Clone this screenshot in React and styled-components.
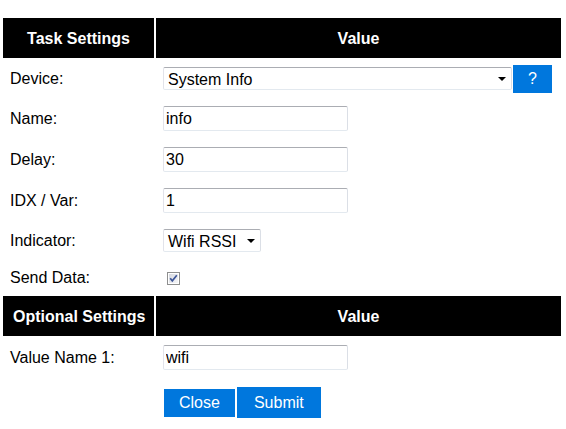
import React from "react";
import styled, { createGlobalStyle } from "styled-components";

const Global = createGlobalStyle`
  html, body { margin: 0; padding: 0; background: #fff; }
  body { font-family: "Liberation Sans", Arial, sans-serif; font-size: 16px; color: #000; }
`;

const Page = styled.div`
  padding: 16px 0 0 1px;
`;

const Table = styled.table`
  border-collapse: separate;
  border-spacing: 2px;
  table-layout: fixed;
  width: 562px;
`;

const Th = styled.th`
  box-sizing: border-box;
  width: ${(p) => (p.$narrow ? "151px" : "auto")};
  height: 40px;
  padding: 1px 10px 0;
  background: #000;
  color: #fff;
  font-weight: bold;
  font-size: 16px;
  text-align: center;
  vertical-align: middle;
  white-space: nowrap;
`;

const Td = styled.td`
  padding: 7px;
  vertical-align: middle;
  white-space: nowrap;
`;

const Input = styled.input`
  box-sizing: border-box;
  display: block;
  width: 185px;
  height: 25px;
  margin: 0;
  padding: 1px 2px 0;
  font-family: inherit;
  font-size: 16px;
  color: #000;
  background: #fff;
  border: 1px solid;
  border-color: #abadb3 #dbdfe6 #e3e9ef #e2e3ea;
  border-radius: 2px;
  outline: none;
`;

const SelectRow = styled.div`
  display: flex;
  align-items: center;
  height: 23px;
`;

const Select = styled.div`
  box-sizing: border-box;
  display: flex;
  align-items: center;
  justify-content: space-between;
  width: ${(p) => p.$w}px;
  height: 23px;
  padding: 1px 5px 0 4px;
  border: 1px solid;
  border-color: #abadb3 #dbdfe6 #e3e9ef #e2e3ea;
  border-radius: 2px;
  background: #fff;
  font-size: 16px;
  line-height: 21px;
`;

const Arrow = () => (
  <svg width="8" height="4" viewBox="0 0 8 4" aria-hidden="true">
    <polygon points="0,0 8,0 4,4" fill="#000" />
  </svg>
);

const BlueButton = styled.button`
  box-sizing: border-box;
  display: flex;
  align-items: center;
  justify-content: center;
  flex: none;
  height: ${(p) => p.$h}px;
  width: ${(p) => (p.$w ? `${p.$w}px` : "auto")};
  padding: 1px ${(p) => p.$px ?? 15}px 0;
  margin: 0;
  background: #0077dd;
  color: #fff;
  border: 1px solid #fff;
  font-family: inherit;
  font-size: 16px;
  cursor: pointer;
`;

const Buttons = styled.div`
  display: flex;
  align-items: center;
`;

const CheckWrap = styled.span`
  display: block;
  width: 13px;
  height: 13px;
  margin: 3px 3px 3px 4px;
`;

const Checkbox = () => (
  <CheckWrap>
    <svg width="13" height="13" viewBox="0 0 13 13" aria-hidden="true">
      <defs>
        <linearGradient id="cbg" x1="0" y1="0" x2="1" y2="1">
          <stop offset="0" stopColor="#d6d9e0" />
          <stop offset="1" stopColor="#f6f6f8" />
        </linearGradient>
      </defs>
      <rect x="0.5" y="0.5" width="12" height="12" fill="#fff" stroke="#8e8f8f" />
      <rect x="2" y="2" width="9" height="9" fill="url(#cbg)" />
      <path d="M3.2 6.2 L5.3 8.8 L9.8 3.3" fill="none" stroke="#3d5698" strokeWidth="1.7" />
    </svg>
  </CheckWrap>
);

function TextRow({ label, value }) {
  return (
    <tr>
      <Td>{label}</Td>
      <Td>
        <Input defaultValue={value} />
      </Td>
    </tr>
  );
}

export default function App() {
  return (
    <>
      <Global />
      <Page>
        <Table>
          <tbody>
            <tr>
              <Th $narrow>Task Settings</Th>
              <Th>Value</Th>
            </tr>
            <tr>
              <Td>Device:</Td>
              <Td>
                <SelectRow>
                  <Select $w={349}>
                    <span>System Info</span>
                    <Arrow />
                  </Select>
                  <BlueButton $h={30} $w={41} $px={0}>?</BlueButton>
                </SelectRow>
              </Td>
            </tr>
            <TextRow label="Name:" value="info" />
            <TextRow label="Delay:" value="30" />
            <TextRow label="IDX / Var:" value="1" />
            <tr>
              <Td>Indicator:</Td>
              <Td>
                <Select $w={98}>
                  <span>Wifi RSSI</span>
                  <Arrow />
                </Select>
              </Td>
            </tr>
            <tr>
              <Td>Send Data:</Td>
              <Td>
                <Checkbox />
              </Td>
            </tr>
            <tr>
              <Th $narrow>Optional Settings</Th>
              <Th>Value</Th>
            </tr>
            <TextRow label="Value Name 1:" value="wifi" />
            <tr>
              <Td />
              <Td>
                <Buttons>
                  <BlueButton $h={30} $px={15}>Close</BlueButton>
                  <BlueButton $h={33} $px={17}>Submit</BlueButton>
                </Buttons>
              </Td>
            </tr>
          </tbody>
        </Table>
      </Page>
    </>
  );
}
